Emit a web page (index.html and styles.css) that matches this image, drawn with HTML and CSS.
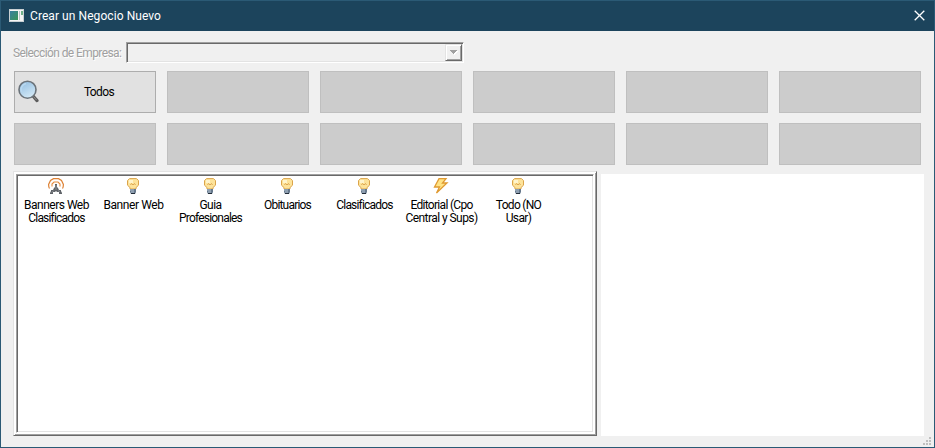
FILE: index.html
```html
<!DOCTYPE html>
<html lang="es">
<head>
<meta charset="utf-8">
<title>Crear un Negocio Nuevo</title>
<link rel="stylesheet" href="styles.css">
</head>
<body>
<svg width="0" height="0" class="defs">
  <symbol id="bulb" viewBox="0 0 16 16">
    <path d="M4.500.6h7l2 2v4.600L11 9.600V11H5V9.600L2.500 7.200V2.600z" fill="#fde39a" stroke="#dba44a"/>
    <path d="M4 2h4v3H4z" fill="#fff4cc"/>
    <path d="M5.500 7l1-1.500L8 7l1.500-1.500L10.500 7" fill="none" stroke="#d9a04a" stroke-width=".9"/>
    <path d="M5 11h6v3l-1 2H6l-1-2z" fill="#66788c"/>
    <path d="M5 12h4M6 14h3" stroke="#b6c5d4"/>
    <path d="M6 15h4v1H6z" fill="#222c38"/>
  </symbol>
</svg>
<div class="window">
  <header class="titlebar">
    <svg class="appicon" width="15" height="13" viewBox="0 0 15 13">
      <defs><linearGradient id="app" x2="1" y2="1"><stop stop-color="#387fa0"/><stop offset="1" stop-color="#399557"/></linearGradient></defs>
      <path d="M0 0h15v13H0z" fill="#c9d0d3"/><path d="M1 1h13v11H1z" fill="#f5f5f5"/>
      <path d="M1 2h8v9H1z" fill="url(#app)"/><path d="M10 2h1v9h-1z" fill="#bcc5c9"/><path d="M12 2h2v4h-2z" fill="#70b18a"/>
    </svg>
    <span class="title">Crear un Negocio Nuevo</span>
    <svg class="close" width="11" height="11" viewBox="0 0 11 11"><path d="M.7.7l9.600 9.600M10.300.7L.7 10.300" stroke="#fff" stroke-width="1.300"/></svg>
  </header>
  <div class="company">
    <span class="label">Selección de Empresa:</span>
    <div class="combo"><div class="drop"><svg width="8" height="5" viewBox="0 0 8 5" shape-rendering="crispEdges"><path d="M1 1h7v1H7v1H6v1H5v1H4V4H3V3H2V2H1z" fill="#fff"/><path d="M0 0h7v1H6v1H5v1H4v1H3V3H2V2H1V1H0z" fill="#a0a0a0"/></svg></div></div>
  </div>
  <div class="buttons">
    <div class="button active">
      <svg class="lens" width="21" height="23" viewBox="0 0 21 23">
        <defs><linearGradient id="glass" x2=".5" y2="1"><stop stop-color="#8ebbe0"/><stop offset="1" stop-color="#d0e7f5"/></linearGradient></defs>
        <path d="M15 16l4 4.600" stroke="#5c5c5c" stroke-width="3.200" stroke-linecap="round"/>
        <path d="M15.500 16.500l3 3.500" stroke="#929292"/>
        <circle cx="9.500" cy="9.700" r="8.500" fill="url(#glass)" stroke="#6b737a" stroke-width="1.600"/>
        <path d="M3.500 12A6.500 6.500 0 0 1 8 3.400" fill="none" stroke="#b9d9f0" stroke-width="1.500"/>
      </svg>
      <span class="todos">Todos</span>
    </div>
    <div class="button"></div><div class="button"></div><div class="button"></div><div class="button"></div><div class="button"></div>
    <div class="button"></div><div class="button"></div><div class="button"></div><div class="button"></div><div class="button"></div><div class="button"></div>
  </div>
  <div class="panes">
    <div class="frame"><div class="list">
      <div class="item"><svg width="16" height="16" viewBox="0 0 16 16">
        <path d="M1.500 10.500Q.6 9 .6 6.500L2.500 2.500 5.500.7h5l3 1.800L15.400 6.500Q15.400 9 14.500 10.500" fill="none" stroke="#dd8134" stroke-width="1.200"/>
        <path d="M4 8.500V6L6 4h4l2 2v2.500" fill="none" stroke="#e58b3e" stroke-width="1.100"/>
        <path d="M7 6h2v3l1 1 1 2h2v1l1 2v1h-3v-2H9l-1-1-1 1H5v2H2v-1l1-2v-1h2l1-2 1-1z" fill="#606469"/><path d="M8 7v5M3.500 14.500l2-1.500M12 14l-2-1.500" stroke="#96999e" stroke-width=".8"/>
      </svg><span class="t1">Banners Web</span><span class="t2">Clasificados</span></div>
      <div class="item"><svg width="16" height="16"><use href="#bulb"/></svg><span class="t3">Banner Web</span></div>
      <div class="item"><svg width="16" height="16"><use href="#bulb"/></svg><span class="t4">Guia</span><span class="t5">Profesionales</span></div>
      <div class="item"><svg width="16" height="16"><use href="#bulb"/></svg><span class="t6">Obituarios</span></div>
      <div class="item"><svg width="16" height="16"><use href="#bulb"/></svg><span class="t2">Clasificados</span></div>
      <div class="item"><svg width="16" height="16" viewBox="0 0 16 16"><path d="M6 .7h7L9.500 5H14L3.500 15 6.500 9H1.500z" fill="#ffe385" stroke="#e09a32" stroke-width="1.300"/></svg><span class="t7">Editorial (Cpo</span><span class="t8">Central y Sups)</span></div>
      <div class="item"><svg width="16" height="16"><use href="#bulb"/></svg><span class="t9">Todo (NO</span><span class="t10">Usar)</span></div>
    </div></div>
    <div class="preview"></div>
  </div>
  <svg class="grip" width="8" height="8" viewBox="0 0 8 8" shape-rendering="crispEdges"><path d="M6 0h2v2H6zM3 3h2v2H3zM6 3h2v2H6zM0 6h2v2H0zM3 6h2v2H3zM6 6h2v2H6z" fill="#bfbfbf"/></svg>
</div>
</body>
</html>
```
FILE: styles.css
```css
* { box-sizing: border-box; }
body { margin: 0; overflow: hidden; font: 12px/13px Roboto, "Liberation Sans", sans-serif; color: #000; }
.defs { position: absolute; }
.window { position: relative; width: 935px; height: 448px; background: #f0f0f0; border: 1px solid #2b5a75; }
.titlebar { height: 30px; background: #1c445c; display: flex; align-items: center; padding: 0 9px 0 8px; color: #fff; }
.appicon { margin-bottom: 2px; }
.title { margin-left: 6px; letter-spacing: .07px; }
.close { margin-left: auto; margin-bottom: 2px; }
.company { display: flex; height: 40px; padding: 11px 0 0 12px; }
.label { width: 113px; padding-top: 5px; color: #a0a0a0; text-shadow: 1px 1px #fff; white-space: nowrap; letter-spacing: -.6px; }
.combo { width: 338px; height: 21px; border: 1px solid; border-color: #a0a0a0 #fff #fff #a0a0a0; box-shadow: inset 1px 1px #696969, inset -1px -1px #e3e3e3; padding: 1px; display: flex; justify-content: flex-end; }
.drop { width: 17px; height: 17px; border: 1px solid; border-color: #e3e3e3 #696969 #696969 #e3e3e3; box-shadow: inset 1px 1px #fff, inset -1px -1px #a0a0a0; display: flex; align-items: center; justify-content: center; }
.buttons { display: grid; grid-template-columns: repeat(6, 142px); grid-auto-rows: 42px; gap: 10px 11px; padding-left: 13px; }
.button { background: #ccc; border: 1px solid #bfbfbf; }
.active { background: #e1e1e1; border-color: #adadad; display: flex; align-items: center; }
.lens { margin-left: 3px; margin-bottom: 1px; }
.todos { width: 116px; padding-left: 4px; text-align: center; letter-spacing: -.6px; }
.panes { display: flex; padding: 6px 0 0 12px; }
.frame { width: 584px; height: 265px; border: 1px solid; border-color: #e3e3e3 #696969 #696969 #e3e3e3; box-shadow: inset 1px 1px #fff, inset -1px -1px #a0a0a0; background: #fff; padding: 2px; }
.list { height: 259px; width: 578px; border: 1px solid; border-color: #a0a0a0 #fff #fff #a0a0a0; box-shadow: inset 1px 1px #696969, inset -1px -1px #e3e3e3; display: flex; padding-top: 3px; }
.item { width: 77px; display: flex; flex-direction: column; align-items: center; white-space: nowrap; }
.item svg { margin-bottom: 5px; }
.item span { padding-left: 2px; }
.t1 { letter-spacing: -.5px; }
.t2 { letter-spacing: -.8px; }
.t3 { letter-spacing: -.4px; }
.t4 { letter-spacing: -.5px; }
.t5 { letter-spacing: -.8px; }
.t6 { letter-spacing: -.8px; }
.t7 { letter-spacing: -.7px; }
.t8 { letter-spacing: -.55px; }
.t9 { letter-spacing: -.7px; }
.t10 { letter-spacing: -.6px; }
.preview { width: 323px; height: 262px; margin: 3px 0 0 4px; background: #fff; }
.grip { position: absolute; right: 3px; bottom: 2px; }
```
